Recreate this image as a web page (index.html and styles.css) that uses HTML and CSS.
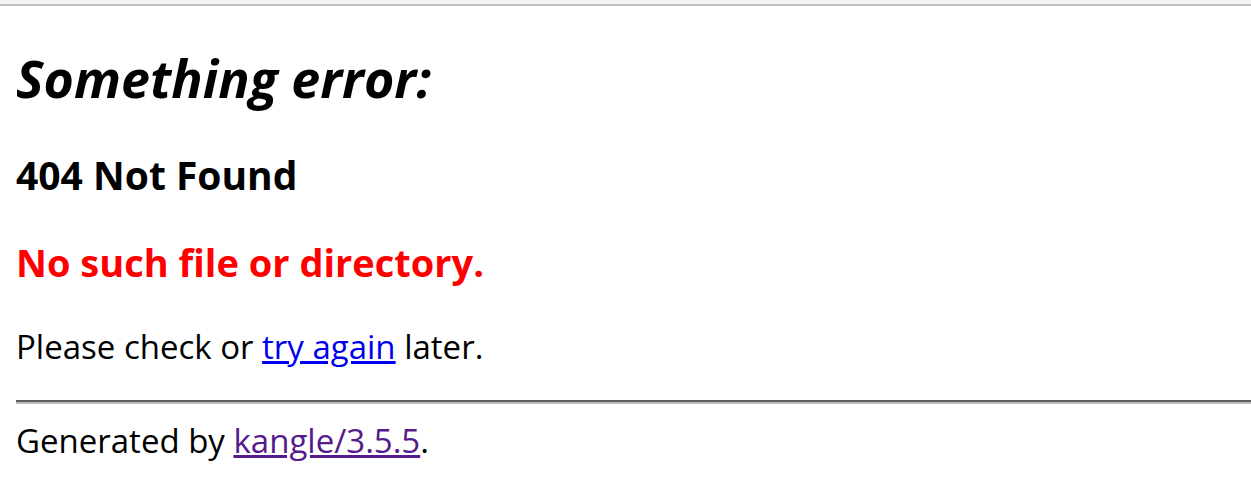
FILE: index.html
```html
<!DOCTYPE html>
<html>
<head>
<meta charset="utf-8">
<title>404 Not Found</title>
<link rel="stylesheet" href="styles.css">
</head>
<body>
<div class="topbar"></div>
<main class="page">
<h1 class="title"><i>Something error:</i></h1>
<h2 class="code">404 Not Found</h2>
<p class="reason">No such file or directory.</p>
<p class="hint">Please check or <a class="link" href="#">try again</a> later.</p>
<hr class="rule">
<p class="footer">Generated by <a class="link visited" href="#">kangle/3.5.5</a>.</p>
</main>
</body>
</html>
```
FILE: styles.css
```css
html, body {
  margin: 0;
  padding: 0;
  background: #fff;
}
body {
  font-family: "Open Sans", "Noto Sans", sans-serif;
  color: #000;
}
.topbar {
  height: 4px;
  background: #f2f2f2;
  border-bottom: 2px solid #c0c0c0;
}
.page {
  padding: 0 0 0 16px;
  display: flex;
  flex-direction: column;
}
.title {
  margin: 42px 0 0;
  font-size: 52px;
  line-height: 60px;
  font-weight: 700;
}
.code {
  margin: 45px 0 0;
  font-size: 39px;
  line-height: 44px;
  font-weight: 700;
}
.reason {
  margin: 43px 0 0;
  font-size: 38px;
  line-height: 44px;
  font-weight: 700;
  color: #ff0000;
}
.hint {
  margin: 43px 0 0;
  font-size: 33px;
  line-height: 40px;
}
.rule {
  margin: 33px 0 0;
  height: 0;
  border: 0;
  border-top: 2px solid #5e5e5e;
  border-bottom: 2px solid #bdbdbd;
}
.footer {
  margin: 17px 0 0;
  font-size: 33px;
  line-height: 40px;
}
.link {
  color: #0000ee;
  text-decoration: underline;
}
.link.visited {
  color: #551a8b;
}
```
